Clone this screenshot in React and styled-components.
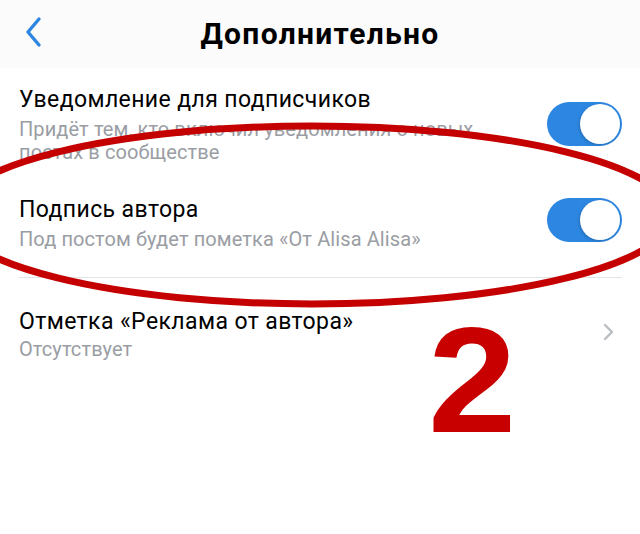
import React from "react";
import styled, { createGlobalStyle } from "styled-components";

const Global = createGlobalStyle`
  html, body { margin: 0; padding: 0; background: #fff; }
  body { font-family: Roboto, "Noto Sans", "DejaVu Sans", sans-serif; }
`;

const Screen = styled.div`
  position: relative;
  width: 640px;
  height: 534px;
  overflow: hidden;
  background: #fff;
`;

const Header = styled.header`
  height: 68px;
  display: grid;
  grid-template-columns: 80px 1fr 80px;
  align-items: center;
  background: #fbfbfb;
`;

const Back = styled.button`
  border: 0;
  background: none;
  padding: 0 0 4px 24px;
  display: flex;
  align-items: center;
  height: 100%;
`;

const Title = styled.h1`
  margin: 0 0 2px;
  text-align: center;
  font-size: 30px;
  font-weight: 700;
  color: #000;
  letter-spacing: 1.3px;
`;

const List = styled.div`
  display: flex;
  flex-direction: column;
  padding: 0 18px 0 19px;
`;

const Row = styled.div`
  display: flex;
  align-items: center;
  gap: 12px;
  padding: ${(p) => p.$pad || "14px 0"};
  border-bottom: ${(p) => (p.$divider ? "1px solid #e3e4e6" : "none")};
`;

const Text = styled.div`
  flex: 1;
  display: flex;
  flex-direction: column;
  gap: ${(p) => p.$gap || "4px"};
`;

const Label = styled.div`
  font-size: 23px;
  letter-spacing: 0.4px;
  color: #000;
  line-height: 28px;
`;

const Hint = styled.div`
  font-size: 20px;
  letter-spacing: 0.1px;
  color: #9a9da4;
  line-height: 23px;
  max-width: 480px;
`;

const Switch = styled.div`
  flex: none;
  width: 75px;
  height: 44px;
  border-radius: 22px;
  background: #2d87e2;
  position: relative;
  margin-top: ${(p) => p.$shift || "0"};
  &::after {
    content: "";
    position: absolute;
    top: 2px;
    right: 2px;
    width: 40px;
    height: 40px;
    border-radius: 50%;
    background: #fff;
    box-shadow: -1px 1px 3px rgba(0, 0, 0, 0.2);
  }
`;

const Chevron = styled.svg`
  flex: none;
  margin: 0 6px 6px 0;
`;

const Overlay = styled.svg`
  position: absolute;
  left: 0;
  top: 0;
  pointer-events: none;
`;

const Mark = styled.div`
  position: absolute;
  left: 428px;
  top: 305px;
  font-family: "Liberation Sans", Arial, sans-serif;
  font-weight: 700;
  font-size: 150px;
  line-height: 1;
  color: #c80000;
  transform: scaleX(1.06);
  transform-origin: left top;
`;

export default function App() {
  return (
    <Screen>
      <Global />
      <Header>
        <Back aria-label="Назад">
          <svg width="20" height="32" viewBox="0 0 20 32">
            <path d="M15 3L4 16l11 13" fill="none" stroke="#2d87e2" strokeWidth="3.4" strokeLinecap="round" strokeLinejoin="round" />
          </svg>
        </Back>
        <Title>Дополнительно</Title>
        <span />
      </Header>
      <List>
        <Row $pad="18px 0 16px">
          <Text>
            <Label>Уведомление для подписчиков</Label>
            <Hint>Придёт тем, кто включил уведомления о новых постах в сообществе</Hint>
          </Text>
          <Switch $shift="-3px" />
        </Row>
        <Row $divider $pad="16px 0 26px">
          <Text>
            <Label>Подпись автора</Label>
            <Hint>Под постом будет пометка «От Alisa Alisa»</Hint>
          </Text>
          <Switch $shift="-7px" />
        </Row>
        <Row $pad="30px 0">
          <Text $gap="2px">
            <Label>Отметка «Реклама от автора»</Label>
            <Hint>Отсутствует</Hint>
          </Text>
          <Chevron width="14" height="20" viewBox="0 0 14 20">
            <path d="M3 3l7 7-7 7" fill="none" stroke="#b9bcc1" strokeWidth="2.4" strokeLinecap="round" strokeLinejoin="round" />
          </Chevron>
        </Row>
      </List>
      <Overlay width="640" height="534" viewBox="0 0 640 534">
        <ellipse cx="312" cy="215" rx="360" ry="89" fill="none" stroke="#c40000" strokeWidth="7" />
      </Overlay>
      <Mark>2</Mark>
    </Screen>
  );
}
